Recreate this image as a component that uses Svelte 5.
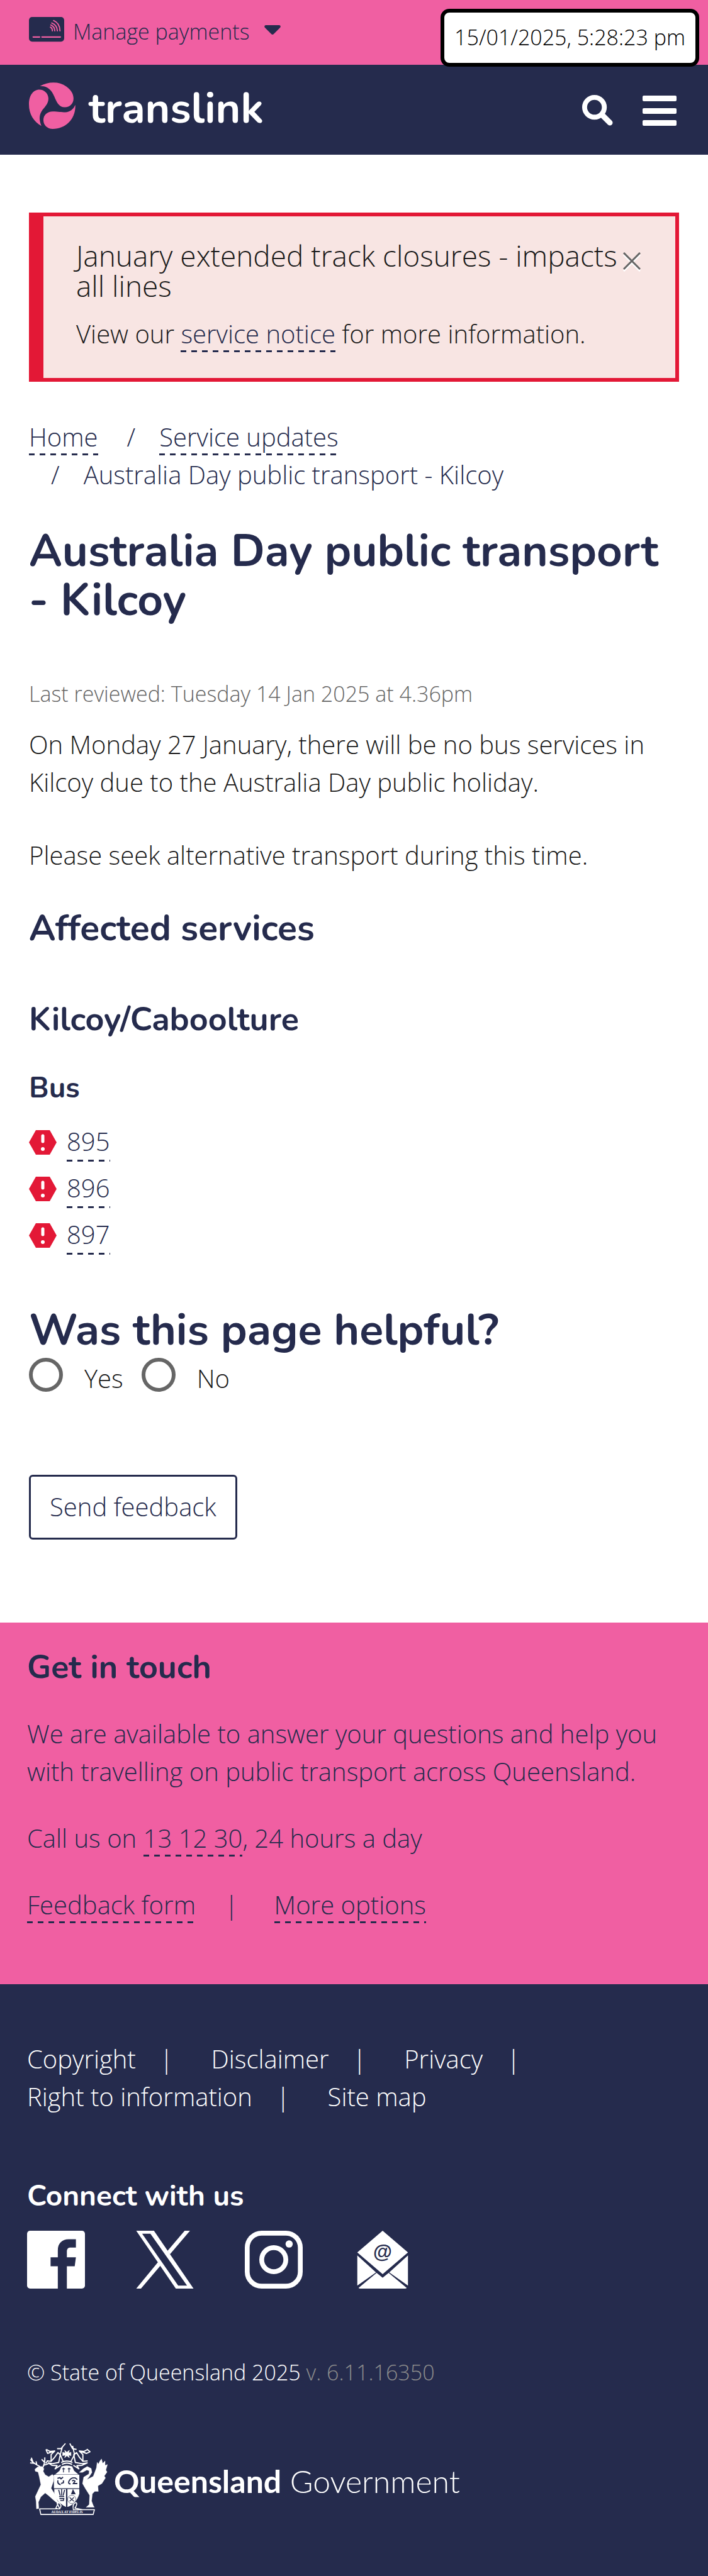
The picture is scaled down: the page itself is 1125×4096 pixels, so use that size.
<script>
  const services = ['895', '896', '897'];
  let helpful = $state('');
</script>

<div class="page">
  <div class="topbar">
    <button class="payments" type="button">
      <svg class="card-icon" viewBox="0 0 176 123" aria-hidden="true">
        <rect width="176" height="123" rx="16" fill="#252b4d" />
        <g fill="none" stroke="#f05fa2" stroke-width="6" stroke-linecap="round">
          <path d="M21 100H53M65 100H157" stroke-width="7" />
          <path d="M107 51Q117 56 117 69M109 40Q128 48 129 69M114 30Q140 40 142 69M123 18Q154 31 155 69" />
        </g>
      </svg>
      <span>Manage payments</span>
      <svg class="caret" viewBox="0 0 26 15" aria-hidden="true">
        <path d="M2 0H24Q27 1 25 4L15 14Q13 16 11 14L1 4Q-1 1 2 0Z" fill="#252b4d" />
      </svg>
    </button>
    <time class="stamp">15/01/2025, 5:28:23 pm</time>
  </div>

  <header>
    <a class="brand" href="#home" aria-label="translink">
      <svg viewBox="24 50 232 232" aria-hidden="true">
        <g fill="#f05fa2">
          <path d="M79 69C120 45 175 45 210 70C235 88 246 108 246 131C246 156 228 174 203 174C173 174 163 150 150 120C137 88 115 65 79 69Z" />
          <path d="M76 86C101 86 121 106 121 131C121 160 100 173 86 196C74 216 75 241 86 267C48 246 24 210 24 160C24 115 45 86 76 86Z" />
          <path d="M255 162C258 235 205 282 143 282C115 282 96 262 96 238C96 212 116 195 143 195C170 195 185 199 205 199C228 198 245 185 255 162Z" />
        </g>
      </svg>
      <span>translink</span>
    </a>
    <div class="tools">
      <button type="button" aria-label="Search">
        <svg class="search" viewBox="0 0 50 50" aria-hidden="true">
          <circle cx="20" cy="20" r="16" fill="none" stroke="#fff" stroke-width="8" />
          <path d="M32 32L45 45" stroke="#fff" stroke-width="9" stroke-linecap="round" />
        </svg>
      </button>
      <button type="button" aria-label="Menu">
        <svg class="menu" viewBox="0 0 54 48" fill="#fff" aria-hidden="true">
          <rect width="54" height="9" rx="2" /><rect y="20" width="54" height="9" rx="2" /><rect y="39" width="54" height="9" rx="2" />
        </svg>
      </button>
    </div>
  </header>

  <main>
    <section class="alert">
      <div>
        <h2>January extended track closures - impacts all lines</h2>
        <p>View our <a class="link" href="#notice">service notice</a> for more information.</p>
      </div>
      <button type="button" aria-label="Close">
        <svg viewBox="0 0 28 31" fill="none" stroke-width="3" aria-hidden="true">
          <path d="M1 4L27 30M27 4L1 30" stroke="#fff" />
          <path d="M1 1L27 27M27 1L1 27" stroke="#666" />
        </svg>
      </button>
    </section>

    <nav aria-label="Breadcrumb">
      <ol class="crumbs">
        <li><a class="link" href="#home">Home</a></li>
        <li><a class="link" href="#updates">Service updates</a></li>
        <li>Australia Day public transport - Kilcoy</li>
      </ol>
    </nav>

    <h1>Australia Day public transport - Kilcoy</h1>
    <p class="reviewed">Last reviewed: Tuesday 14 Jan 2025 at 4.36pm</p>
    <p class="intro">On Monday 27 January, there will be no bus services in Kilcoy due to the Australia Day public holiday.</p>
    <p class="advice">Please seek alternative transport during this time.</p>

    <h2 class="affected">Affected services</h2>
    <h3 class="region">Kilcoy/Caboolture</h3>
    <h4>Bus</h4>
    <ul class="routes">
      {#each services as route}
        <li>
          <svg viewBox="0 0 44 39" aria-hidden="true">
            <path d="M11 0H33L44 19.500L33 39H11L0 19.500Z" fill="#e31836" />
            <path d="M22 9V18" stroke="#fff" stroke-width="5" stroke-linecap="round" />
            <circle cx="22" cy="30" r="3" fill="#fff" />
          </svg>
          <a class="link" href={'#route-' + route}>{route}</a>
        </li>
      {/each}
    </ul>

    <form onsubmit={(e) => e.preventDefault()}>
      <fieldset>
        <legend>Was this page helpful?</legend>
        <div class="choices">
          <label><input type="radio" name="helpful" value="yes" bind:group={helpful} /><span>Yes</span></label>
          <label><input type="radio" name="helpful" value="no" bind:group={helpful} /><span>No</span></label>
        </div>
      </fieldset>
      <button class="send" type="submit">Send feedback</button>
    </form>
  </main>

  <section class="touch">
    <h3>Get in touch</h3>
    <p>We are available to answer your questions and help you with travelling on public transport across Queensland.</p>
    <p>Call us on <a class="link" href="tel:131230">13 12 30</a>, 24 hours a day</p>
    <ul class="options">
      <li><a class="link" href="#feedback">Feedback form</a></li>
      <li><a class="link" href="#options">More options</a></li>
    </ul>
  </section>

  <footer>
    <ul class="legal">
      <li><a href="#copyright">Copyright</a></li>
      <li><a href="#disclaimer">Disclaimer</a></li>
      <li><a href="#privacy">Privacy</a></li>
      <li><a href="#rti">Right to information</a></li>
      <li><a href="#sitemap">Site map</a></li>
    </ul>
    <h4>Connect with us</h4>
    <div class="social">
      <a href="#facebook" aria-label="Facebook">
        <svg viewBox="0 0 96 96" aria-hidden="true">
          <rect width="96" height="96" rx="5" fill="#fff" />
          <path d="M51 96V59H39V44H51V32C51 21 58 14 69 14H81V28H73C68 28 66 30 66 35V44H81L79 59H66V96Z" fill="#252b4d" />
        </svg>
      </a>
      <a href="#x" aria-label="X">
        <svg viewBox="0 0 97 98" fill="#fff" aria-hidden="true">
          <path fill-rule="evenodd" d="M0 0H30L97 98H67ZM10 5L71 93H86L24 5Z" />
          <path d="M82 0H91L57 40L53 34ZM0 98H8L41 59L37 53Z" />
        </svg>
      </a>
      <a href="#instagram" aria-label="Instagram">
        <svg viewBox="0 0 96 96" fill="none" stroke="#fff" stroke-width="8" aria-hidden="true">
          <rect x="4" y="4" width="88" height="88" rx="24" />
          <circle cx="48" cy="48" r="20" />
          <circle cx="73.500" cy="22" r="6" fill="#fff" stroke="none" />
        </svg>
      </a>
      <a href="#email" aria-label="Email">
        <svg viewBox="0 0 96 96" fill="#fff" aria-hidden="true">
          <path d="M48 0L90 36L48 72L6 36ZM6 41L37 69L6 91ZM90 41L59 69L90 91ZM8 95L38 70L48 78L58 70L88 95Q87 96 85 96H11Q9 96 8 95Z" />
          <text x="48" y="46" text-anchor="middle" font-size="32" font-weight="700" font-family="Liberation Sans, sans-serif" fill="#252b4d">@</text>
        </svg>
      </a>
    </div>
    <p class="rights">© State of Queensland 2025 <span>v. 6.11.16350</span></p>
    <a class="government" href="#government">
      <svg viewBox="24 32 396 368" aria-hidden="true">
        <g fill="#fff" stroke="#fff" stroke-linejoin="round">
          <!-- deer -->
          <path d="M52 166L66 154L88 152L98 164L94 176L104 194L122 204L140 192L148 200L146 226L134 262L154 294L166 326L178 334L166 338L144 320L122 300L104 286L82 306L70 332L72 364L60 366L58 326L54 304L68 274L82 244L74 204L68 180L54 176Z" stroke-width="1" />
          <path d="M84 160C78 146 44 142 30 116M62 146L58 126M48 136L28 134M44 134L34 108M92 160C94 144 104 144 102 106M98 146L120 138M102 132L86 116M106 136L118 122" fill="none" stroke-width="6" />
          <!-- brolga -->
          <path d="M388 114L394 136L406 124L406 146L418 142L410 170L416 180L402 200L408 210L390 238L370 250L372 278L354 278L342 290L338 326L346 348L352 358H310L326 344L328 298L308 266L292 238L298 206L324 190L326 174L314 170L292 182L276 182L296 164L316 152L336 162L340 182L326 204L314 218L346 202L362 160L366 130L372 140L380 124Z" stroke-width="1" />
          <!-- shield -->
          <path d="M148 194H276V262H148ZM150 266H209V356Q176 342 156 308L150 286ZM216 266H276V290Q260 344 216 356Z" stroke="none" />
          <!-- helmet -->
          <path d="M186 152Q213 142 240 152L250 174L272 192H154L176 174Z" stroke="none" />
          <!-- mantling -->
          <g fill="none" stroke-width="6">
            <path d="M110 66L128 76L152 74L134 92V126L112 124M152 74L116 86L108 66M134 126L150 108L168 82L180 92L172 132L140 138L120 134L138 146L164 148L154 164L182 146" />
            <path d="M318 66L300 76L276 74L294 92V126L318 124M276 74L312 86L330 78L314 64M294 126L278 108L262 82L248 92L256 132L290 138L316 134L290 146L264 148L274 164L246 146" />
            <path d="M206 36L184 62L164 62M190 56L180 92L194 126M228 36L242 62L262 66M242 48L252 92L234 126M184 132Q213 118 242 132M188 142Q213 128 240 142" />
          </g>
          <path d="M202 70L213 80L226 70L222 84L234 80V98L222 94L226 108L213 98L202 108L206 94L192 98V80L206 84Z" stroke-width="2" />
          <path d="M168 340L158 362Q180 374 184 350Q176 330 164 338L178 366H76L82 394H346L352 370H246Q240 340 258 334Q270 338 254 362L292 370" fill="none" stroke-width="5" />
        </g>
        <g fill="none" stroke="#252b4d" stroke-width="4">
          <path d="M196 158V182M190 164H204M224 158V182M218 164H232" />
          <path d="M166 212L178 208L184 214L194 206M168 222Q164 240 182 244M196 222V234L184 238M232 240Q218 240 224 226Q234 206 256 210L266 218M240 226Q246 218 254 226L246 238H266" stroke-width="6" />
          <path d="M172 270L180 300M187 266V300M202 270L194 300M174 304H200M176 314H198L196 324H180" stroke-width="5" />
          <path d="M227 308L249 328M249 308L227 328" />
        </g>
        <path d="M234 292L244 266L258 292Z" fill="#252b4d" />
        <circle cx="238" cy="318" r="21" fill="none" stroke="#252b4d" stroke-width="2" />
        <text x="214" y="388" text-anchor="middle" font-size="17" font-family="Liberation Serif, serif" font-weight="700" fill="#fff">AUDAX AT FIDELIS</text>
      </svg>
      <span><strong>Queensland</strong> Government</span>
    </a>
  </footer>
</div>

<style>
  :global(body) {
    margin: 0;
    background: #fff;
  }
  .page {
    font-family: 'Open Sans', 'Noto Sans', sans-serif;
    font-weight: 300;
    font-size: 40px;
    line-height: 60px;
    color: #1a1a1a;
  }
  h1, h2, h3, h4, p, ul, ol, fieldset, legend {
    margin: 0;
    padding: 0;
    border: 0;
  }
  ul, ol {
    list-style: none;
  }
  svg {
    display: block;
    flex: none;
  }
  button {
    font: inherit;
    color: inherit;
    background: none;
    border: 0;
    padding: 0;
  }
  a {
    color: inherit;
    text-decoration: none;
  }
  .link {
    color: #252b4d;
    padding-bottom: 2px;
    background: repeating-linear-gradient(90deg, #252b4d 0 9px, transparent 9px 17px) left bottom / 100% 3px no-repeat;
  }
  h1, h3, h4, .affected, legend, .brand {
    font-family: Nunito, Lato, sans-serif;
    font-weight: 700;
    color: #252b4d;
  }

  .topbar {
    display: flex;
    justify-content: space-between;
    align-items: flex-start;
    height: 103px;
    padding: 0 14px 0 46px;
    background: #f05fa2;
  }
  .payments {
    display: flex;
    align-items: center;
    padding-top: 20px;
    font-size: 34px;
    color: #252b4d;
  }
  .card-icon {
    width: 56px;
    margin: 0 14px 6px 0;
  }
  .caret {
    width: 26px;
    margin: 0 0 6px 24px;
  }
  .stamp {
    position: relative;
    z-index: 1;
    margin-top: 14px;
    padding: 9px 16px 11px;
    border: 6px solid #000;
    border-radius: 14px;
    background: #fff;
    color: #000;
    font-size: 34px;
  }
  header {
    display: flex;
    justify-content: space-between;
    align-items: center;
    height: 143px;
    box-sizing: border-box;
    padding: 0 50px 14px 46px;
    background: #252b4d;
  }
  .brand {
    display: flex;
    align-items: center;
    gap: 21px;
    color: #fff;
    font-size: 68px;
  }
  .brand svg {
    width: 74px;
  }
  .brand span {
    padding-top: 10px;
  }
  .tools {
    display: flex;
    align-items: center;
    gap: 47px;
    padding-top: 16px;
  }
  .search {
    width: 49px;
  }
  .menu {
    width: 54px;
  }

  main {
    padding: 92px 46px 132px;
  }
  .alert {
    display: flex;
    align-items: flex-start;
    justify-content: space-between;
    padding: 38px 55px 40px 52px;
    border: 6px solid #e31836;
    border-left-width: 23px;
    background: #f8e5e3;
  }
  .alert h2 {
    font-weight: 300;
    font-size: 46px;
    line-height: 48px;
    margin-bottom: 23px;
  }
  .alert button {
    padding-top: 19px;
  }
  .alert svg {
    width: 28px;
  }
  .crumbs {
    display: flex;
    flex-wrap: wrap;
    margin-top: 58px;
    color: #252b4d;
  }
  .crumbs li {
    padding-right: 11px;
  }
  .crumbs li + li::before {
    content: '/';
    padding: 0 38px 0 35px;
  }
  h1 {
    margin-top: 53px;
    font-size: 71px;
    line-height: 78px;
  }
  .reviewed {
    margin-top: 82px;
    font-size: 34px;
    line-height: 54px;
    color: #666;
  }
  .intro {
    margin-top: 24px;
  }
  .advice {
    margin-top: 56px;
  }
  .affected {
    margin-top: 53px;
    font-size: 57px;
    line-height: 66px;
  }
  .region {
    margin-top: 82px;
  }
  h3 {
    font-size: 52px;
    line-height: 60px;
  }
  h4 {
    margin-top: 52px;
    font-size: 46px;
    line-height: 54px;
  }
  .routes {
    display: grid;
    gap: 12px;
    margin-top: 28px;
  }
  .routes li {
    display: flex;
    align-items: center;
    gap: 16px;
  }
  .routes svg {
    width: 44px;
  }
  form {
    margin-top: 81px;
  }
  legend {
    font-size: 70px;
    line-height: 78px;
  }
  .choices {
    display: flex;
    gap: 29px;
    padding-top: 5px;
  }
  label {
    display: flex;
    gap: 34px;
  }
  label span {
    padding-top: 3px;
  }
  input {
    appearance: none;
    box-sizing: border-box;
    width: 54px;
    height: 54px;
    margin: 0;
    border: 6px solid #666;
    border-radius: 50%;
    background: #fff;
  }
  input:checked {
    background: radial-gradient(#252b4d 0 12px, #fff 13px);
  }
  .send {
    margin-top: 123px;
    padding: 18px 30px 19px;
    border: 3px solid #252b4d;
    border-radius: 6px;
    color: #252b4d;
    background: #fff;
  }

  .touch {
    display: grid;
    gap: 46px;
    padding: 41px 43px 96px;
    background: #f05fa2;
    color: #252b4d;
  }
  .options {
    display: flex;
  }
  .options li + li::before {
    content: '|';
    padding: 0 57px 0 46px;
  }

  footer {
    padding: 89px 43px 96px;
    background: #252b4d;
    color: #fff;
  }
  .legal {
    display: flex;
    flex-wrap: wrap;
  }
  .legal li:not(:last-child)::after {
    content: '|';
    padding: 0 60px 0 38px;
  }
  footer h4 {
    margin-top: 101px;
    color: #fff;
  }
  .social {
    display: flex;
    gap: 81px;
    margin-top: 28px;
  }
  .social svg {
    width: 92px;
    height: 92px;
  }
  .rights {
    margin-top: 106px;
    font-size: 34px;
    line-height: 54px;
  }
  .rights span {
    color: #8c8c8c;
  }
  .government {
    display: flex;
    align-items: center;
    gap: 9px;
    margin: 85px 0 0 3px;
    font-family: Lato, 'Open Sans', sans-serif;
    font-size: 50px;
    font-weight: 300;
  }
  .government strong {
    font-weight: 700;
  }
  .government span {
    padding-top: 6px;
  }
  .government svg {
    width: 126px;
    height: 116px;
  }
</style>
